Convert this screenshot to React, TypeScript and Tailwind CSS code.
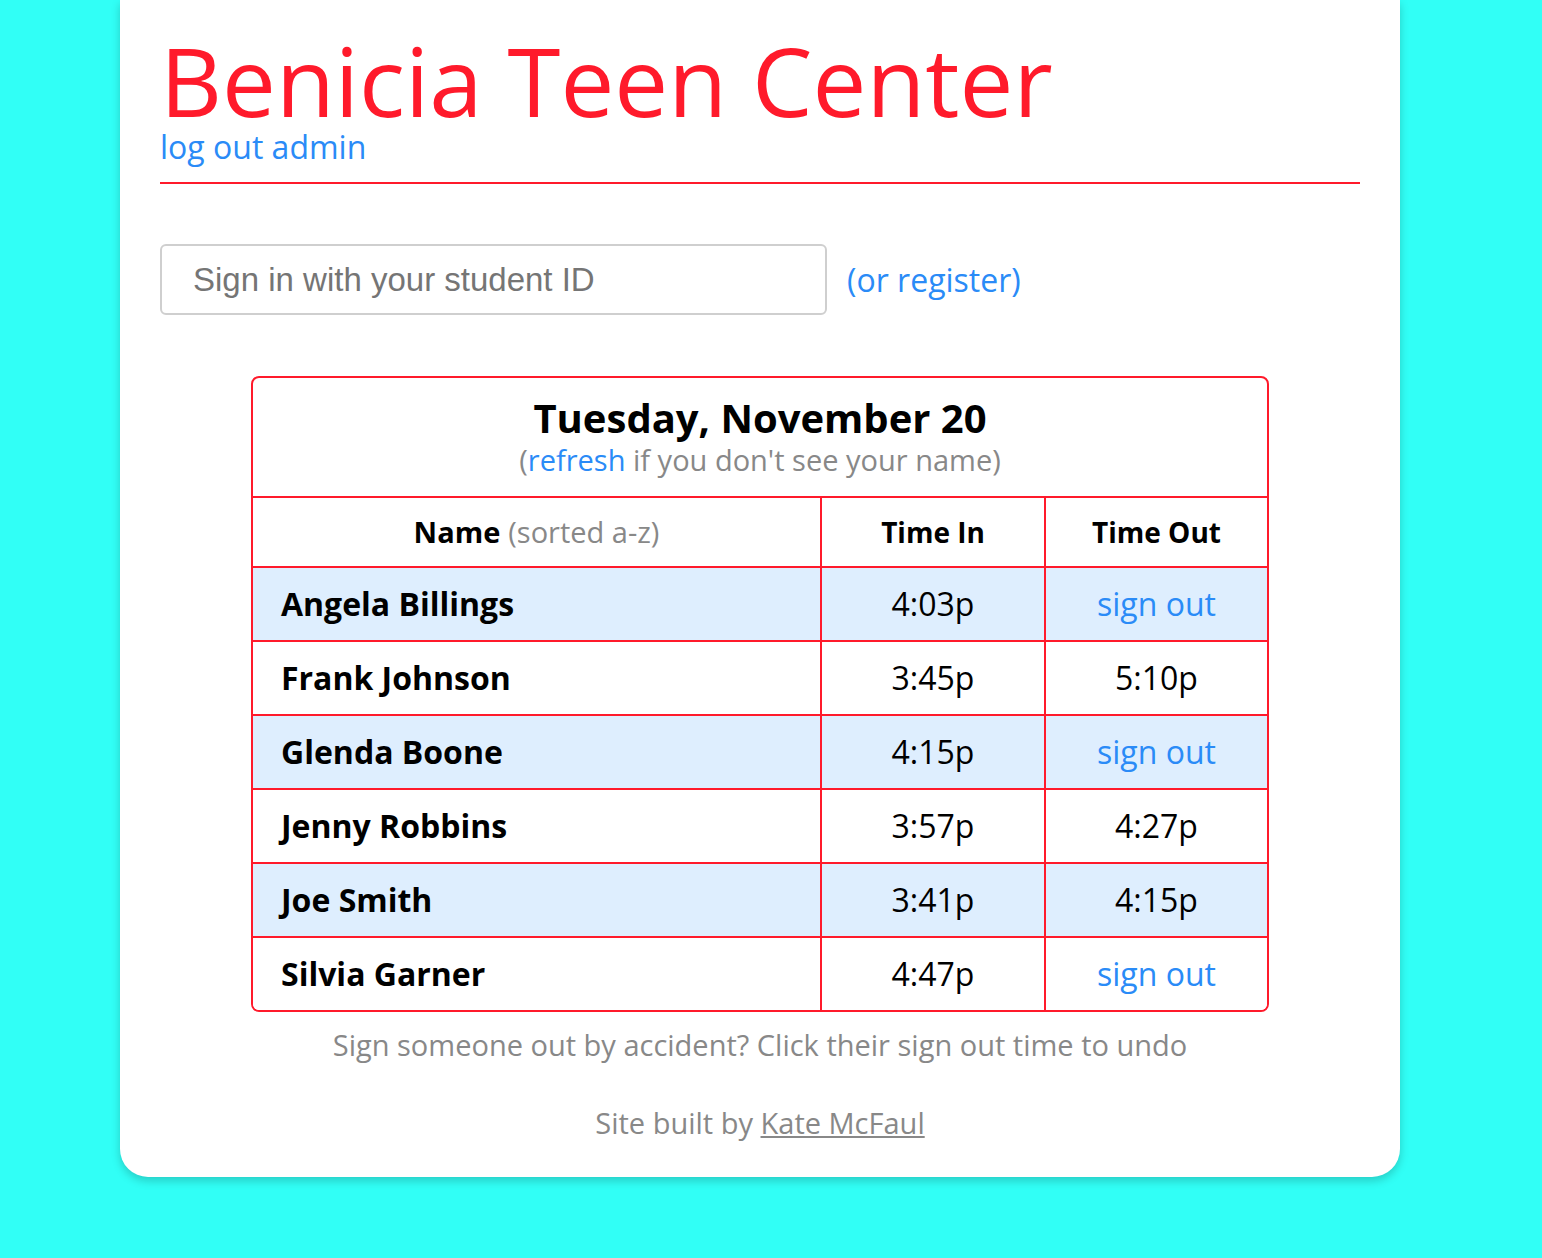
const rows = [
  { name: "Angela Billings", timeIn: "4:03p", timeOut: null },
  { name: "Frank Johnson", timeIn: "3:45p", timeOut: "5:10p" },
  { name: "Glenda Boone", timeIn: "4:15p", timeOut: null },
  { name: "Jenny Robbins", timeIn: "3:57p", timeOut: "4:27p" },
  { name: "Joe Smith", timeIn: "3:41p", timeOut: "4:15p" },
  { name: "Silvia Garner", timeIn: "4:47p", timeOut: null },
];

const App = () => {
  return (
    <div className="min-h-[1258px] bg-[#31fff6] pl-[120px] font-['Open_Sans',sans-serif]">
      <div className="w-[1280px] rounded-b-[28px] bg-white px-10 pb-[34px] pt-[32px] shadow-[0_4px_10px_rgba(0,0,0,0.2)]">
        <div className="border-b-2 border-[#ff1a2b] pb-[19px]">
          <h1 className="text-[96px] leading-none text-[#ff1a2b]">
            Benicia Teen Center
          </h1>
          <a className="mt-[3px] block text-[32px] leading-none text-[#2a8bf7]">
            log out admin
          </a>
        </div>

        <div className="mt-[60px] flex items-center gap-5">
          <input
            className="h-[71px] w-[667px] rounded-md border-2 border-[#cfcfcf] px-[31px] font-['Liberation_Sans',sans-serif] text-[33px] text-[#555] placeholder:text-[#757575] outline-none"
            placeholder="Sign in with your student ID"
          />
          <a className="text-[32px] text-[#2a8bf7]">(or register)</a>
        </div>

        <div className="ml-[91px] mt-[61px] w-[1018px] overflow-hidden rounded-lg border-2 border-[#ff1a2b]">
          <div className="flex h-[118px] flex-col items-center pt-[16px]">
            <h2 className="text-[40px] font-bold leading-[48px] text-black">
              Tuesday, November 20
            </h2>
            <p className="text-[29px] leading-[36px] text-[#888]">
              (<a className="text-[#2a8bf7]">refresh</a> if you don't see your
              name)
            </p>
          </div>

          <div className="grid h-[70px] grid-cols-[567px_224px_223px] border-t-2 border-[#ff1a2b] text-[28px]">
            <div className="flex items-center justify-center text-[29px]">
              <span className="font-bold text-black">Name</span>
              <span className="ml-2 text-[#888]">(sorted a-z)</span>
            </div>
            <div className="flex items-center justify-center border-l-2 border-[#ff1a2b] font-bold">
              Time In
            </div>
            <div className="flex items-center justify-center border-l-2 border-[#ff1a2b] font-bold">
              Time Out
            </div>
          </div>

          {rows.map((r, i) => (
            <div
              key={r.name}
              className={
                "grid h-[74px] grid-cols-[567px_224px_223px] border-t-2 border-[#ff1a2b] text-[32px] " +
                (i % 2 === 0 ? "bg-[#deeefe]" : "bg-white")
              }
            >
              <div className="flex items-center pl-7 font-bold text-black">
                {r.name}
              </div>
              <div className="flex items-center justify-center border-l-2 border-[#ff1a2b] text-black">
                {r.timeIn}
              </div>
              <div className="flex items-center justify-center border-l-2 border-[#ff1a2b]">
                {r.timeOut ? (
                  <span className="text-black">{r.timeOut}</span>
                ) : (
                  <a className="text-[#2a8bf7]">sign out</a>
                )}
              </div>
            </div>
          ))}
        </div>

        <p className="mt-[13px] text-center text-[29px] leading-[40px] text-[#888]">
          Sign someone out by accident? Click their sign out time to undo
        </p>
        <p className="mt-[38px] text-center text-[29px] leading-[40px] text-[#888]">
          Site built by <a className="underline">Kate McFaul</a>
        </p>
      </div>
    </div>
  );
};

export default App;
